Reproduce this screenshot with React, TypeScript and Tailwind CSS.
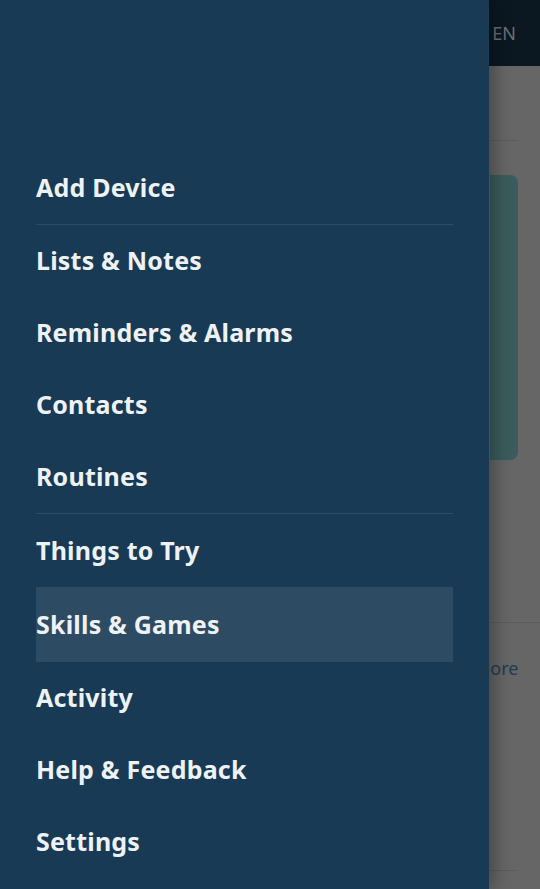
import React from 'react';

const groups: string[][] = [
  ['Add Device'],
  ['Lists & Notes', 'Reminders & Alarms', 'Contacts', 'Routines'],
  ['Things to Try', 'Skills & Games', 'Activity', 'Help & Feedback', 'Settings'],
];

const active = 'Skills & Games';

export default function App() {
  return (
    <div className="relative w-[540px] h-[889px] overflow-hidden bg-[#666666] font-['Noto_Sans',sans-serif]">
      {/* Dimmed page behind the drawer */}
      <div className="flex flex-col h-full">
        <div className="h-[66px] bg-[#0b1822] flex items-center justify-end pr-[24px]">
          <span className="text-[18px] text-[#6b6f73]">EN</span>
        </div>
        <div className="flex flex-col pl-[490px] pr-[22px]">
          <div className="h-[75px] border-b border-[#5c5c5c]" />
          <div className="mt-[34px] h-[285px] rounded-r-[8px] bg-[#3b5c5c]" />
          <div className="mt-[162px] h-[1px] bg-[#5c5c5c] -mr-[22px]" />
          <div className="mt-[32px] text-[18px] text-[#1f3d52] -ml-[16px]">More</div>
          <div className="mt-[188px] h-[1px] bg-[#5c5c5c]" />
        </div>
      </div>

      {/* Drawer */}
      <nav className="absolute left-0 top-0 h-full w-[489px] bg-[#183a55] shadow-[6px_0_16px_rgba(0,0,0,0.3)] pt-[152px]">
        {groups.map((group, gi) => (
          <div key={gi}>
            {gi === 1 && <div className="mx-[36px] h-[1px] bg-[#2b4d68]" />}
            {gi === 2 && <div className="mx-[36px] h-[1px] mb-[1px] bg-[#2b4d68]" />}
            {group.map(label => (
              <div
                key={label}
                className={
                  'mx-[36px] flex items-center text-[25px] font-bold text-[#eef2f5] tracking-[0.2px] ' +
                  (label === active ? 'h-[75px] bg-[#2d4b62]' : 'h-[72px]')
                }
              >
                {label}
              </div>
            ))}
          </div>
        ))}
      </nav>
    </div>
  );
}
